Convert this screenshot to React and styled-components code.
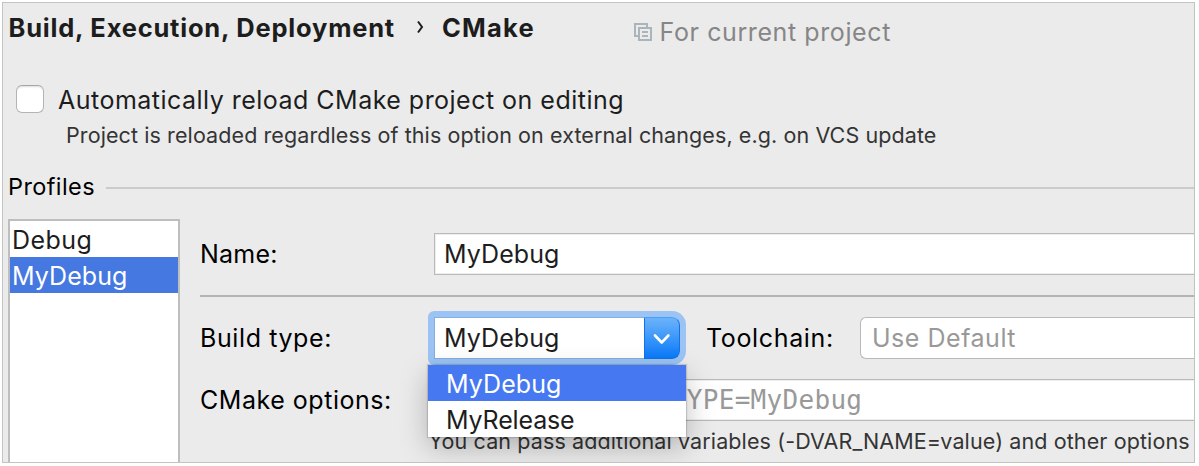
import React from "react";
import styled, { createGlobalStyle } from "styled-components";

const Global = createGlobalStyle`
  * { box-sizing: border-box; }
  body { margin: 0; background: #fff; }
`;

const Frame = styled.main`
  display: flex;
  flex-direction: column;
  width: 1193px;
  height: 461px;
  margin: 2px 0 0 2px;
  border: 1px solid #c3c3c3;
  background: #ebebeb;
  overflow: hidden;
  font-family: Inter, "Liberation Sans", sans-serif;
  font-size: 25px;
  line-height: 30px;
  color: #000;
  white-space: nowrap;
`;

const Text = styled.span`
  letter-spacing: ${(p) => p.$track || 0}px;
`;

const Header = styled.header`
  display: flex;
  align-items: flex-start;
  height: 82px;
  padding: 10px 0 0 5.5px;
  color: #1d1d1d;
`;

const Crumb = styled(Text)`
  font-size: 25.5px;
  font-weight: 700;
`;

const CrumbArrow = styled.svg`
  width: 8px;
  height: 16px;
  margin: 6px 17.5px 0 21.5px;
  fill: none;
  stroke: #1d1d1d;
  stroke-width: 2;
`;

const Scope = styled.div`
  display: flex;
  margin: 4px 0 0 98.5px;
  color: #868686;
`;

const ScopeIcon = styled.svg`
  width: 18px;
  height: 18px;
  margin: 6px 8px 0 0;
  fill: none;
  stroke: #a9b5bb;
  stroke-width: 2;
`;

const CheckRow = styled.label`
  display: flex;
  height: 30px;
  padding-left: 13px;
  color: #1d1d1d;
`;

const CheckBox = styled.span`
  width: 28px;
  height: 28px;
  margin-right: 14px;
  border: 1px solid #b4b4b4;
  border-top-color: #a6a6a6;
  border-radius: 6px;
  background: #fff;
  box-shadow: inset 0 2px 2px -1px #ddd;
`;

const Hint = styled(Text)`
  font-size: 21.5px;
  line-height: 26px;
  color: #343434;
  margin: ${(p) => p.$margin};
`;

const SectionTitle = styled.div`
  display: flex;
  margin: 23px 0 17px;
  padding-left: 5px;
  font-size: 23.5px;
  line-height: 31px;
`;

const Rule = styled.div`
  flex: 1;
  height: 2px;
  margin: 16px 0 0 11px;
  background: #cbcbcb;
`;

const Body = styled.div`
  display: flex;
  flex: 1;
  padding-left: 5px;
`;

const ProfileList = styled.div`
  width: 172px;
  border: 2px solid #bebebe;
  border-bottom: 0;
  background: #fff;
`;

const Profile = styled.div`
  height: 36px;
  padding: 1px 0 0 2px;
  line-height: 36px;
  color: ${(p) => (p.$selected ? "#fff" : "#1d1d1d")};
  background: ${(p) => (p.$selected ? "#4578e0" : "transparent")};
`;

const Form = styled.div`
  display: flex;
  flex-direction: column;
  flex: 1;
  min-width: 0;
  margin-left: 20px;
  padding-top: 14px;
`;

const FormRow = styled.div`
  display: flex;
  height: 42px;
  line-height: 42px;
  margin-bottom: 20px;
`;

const Label = styled(Text)`
  flex: none;
  width: ${(p) => p.$width}px;
  margin-left: ${(p) => p.$gap || 0}px;
`;

const Field = styled.div`
  flex: 1;
  min-width: 0;
  border: 1px solid #b9b9b9;
  border-right: 0;
  border-radius: ${(p) => (p.$rounded ? "6px 0 0 6px" : "0")};
  padding-left: ${(p) => (p.$rounded ? 11 : 9)}px;
  line-height: 40px;
  background: #fff;
  box-shadow: ${(p) => (p.$rounded ? "none" : "inset 1px 1px #eee, inset 0 -1px #eee")};
  color: ${(p) => (p.$muted ? "#999" : "#1d1d1d")};
`;

const Mono = styled.span`
  font-family: "DejaVu Sans Mono", monospace;
  font-size: 26px;
  letter-spacing: 0.3px;
  margin-left: 3.5px;
`;

const Divider = styled.div`
  flex: none;
  height: 2px;
  margin-bottom: 20px;
  background: #b3b3b3;
`;

const Combo = styled.div`
  position: relative;
  display: flex;
  width: 246px;
  border-radius: 2px 8px 8px 2px;
  box-shadow: 0 0 0 6px #9bc4f4;
`;

const ComboValue = styled.div`
  width: 210px;
  border: 1px solid #82aee0;
  border-right: 0;
  padding-left: 9px;
  line-height: 40px;
  background: #fff;
  color: #1d1d1d;
`;

const ComboButton = styled.div`
  width: 36px;
  border: 1px solid #1472e6;
  border-top-color: #4a9df5;
  border-radius: 0 8px 8px 0;
  background: linear-gradient(#6cb3fa, #0a7afa);
`;

const ComboArrow = styled.svg`
  display: block;
  width: 18px;
  height: 12px;
  margin: 15px 0 0 8px;
  fill: none;
  stroke: #fff;
  stroke-width: 2.6;
  stroke-linecap: round;
  stroke-linejoin: round;
`;

const Popup = styled.div`
  position: absolute;
  z-index: 1;
  left: -6px;
  top: 48px;
  width: 258px;
  background: #fff;
  box-shadow: 0 0 1px 1px rgba(0, 0, 0, 0.14), 0 10px 28px rgba(0, 0, 0, 0.25);
`;

const Option = styled.div`
  height: 36px;
  padding: 1px 0 0 18px;
  line-height: 36px;
  color: ${(p) => (p.$active ? "#fff" : "#1d1d1d")};
  background: ${(p) => (p.$active ? "#4678f2" : "#fff")};
`;

export default function App() {
  return (
    <>
      <Global />
      <Frame>
        <Header>
          <Crumb $track={0.78}>Build, Execution, Deployment</Crumb>
          <CrumbArrow viewBox="0 0 8 16">
            <path d="M2 2.5 L6 8 L2 13.5" />
          </CrumbArrow>
          <Crumb $track={1.25}>CMake</Crumb>
          <Scope>
            <ScopeIcon viewBox="0 0 18 18">
              <path d="M4 13H1V1H13V4" />
              <path d="M5 5H17V17H5Z" />
              <path d="M8 9H14M8 13H14" />
            </ScopeIcon>
            <Text $track={0.6}>For current project</Text>
          </Scope>
        </Header>

        <CheckRow>
          <CheckBox />
          <Text $track={0.48}>Automatically reload CMake project on editing</Text>
        </CheckRow>
        <Hint $track={0.095} $margin="7px 0 0 63px">
          Project is reloaded regardless of this option on external changes, e.g. on VCS update
        </Hint>

        <SectionTitle>
          <Text $track={0.4}>Profiles</Text>
          <Rule />
        </SectionTitle>

        <Body>
          <ProfileList>
            <Profile><Text $track={0.45}>Debug</Text></Profile>
            <Profile $selected><Text $track={0.08}>MyDebug</Text></Profile>
          </ProfileList>

          <Form>
            <FormRow>
              <Label $width={234} $track={0.25}>Name:</Label>
              <Field><Text $track={0.08}>MyDebug</Text></Field>
            </FormRow>
            <Divider />
            <FormRow>
              <Label $width={234} $track={0.6}>Build type:</Label>
              <Combo>
                <ComboValue><Text $track={0.08}>MyDebug</Text></ComboValue>
                <ComboButton>
                  <ComboArrow viewBox="0 0 18 12">
                    <path d="M2 2.5 L8.7 9.5 L15.4 2.5" />
                  </ComboArrow>
                </ComboButton>
                <Popup>
                  <Option $active><Text $track={0.08}>MyDebug</Text></Option>
                  <Option><Text $track={-0.15}>MyRelease</Text></Option>
                </Popup>
              </Combo>
              <Label $width={154} $gap={26} $track={0.65}>Toolchain:</Label>
              <Field $rounded $muted><Text $track={0.52}>Use Default</Text></Field>
            </FormRow>
            <FormRow>
              <Label $width={234} $track={0.53}>CMake options:</Label>
              <Field $muted><Mono>-DCMAKE_BUILD_TYPE=MyDebug</Mono></Field>
            </FormRow>
            <Hint $track={0.11} $margin="-13px 0 0 228.5px">
              You can pass additional variables (-DVAR_NAME=value) and other options
            </Hint>
          </Form>
        </Body>
      </Frame>
    </>
  );
}
